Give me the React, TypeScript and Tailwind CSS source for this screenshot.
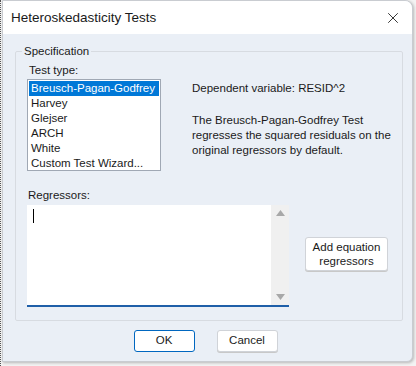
import { X } from "lucide-react";

const tests = [
  "Breusch-Pagan-Godfrey",
  "Harvey",
  "Glejser",
  "ARCH",
  "White",
  "Custom Test Wizard...",
];

export default function App() {
  return (
    <div
      className="flex h-[366px] w-[416px] bg-[#f3f3f3] text-[11.5px] text-[#1a1a1a]"
      style={{ fontFamily: '"Liberation Sans", Arial, sans-serif' }}
    >
      {/* bit of the window behind */}
      <div className="w-[2px] border-l border-dotted border-[#555]" />

      <div className="mb-[4px] mr-[3px] flex flex-1 flex-col overflow-hidden rounded-tr-[8px] rounded-br-[6px] border border-[#c9ccd1] bg-[#eaeff6] shadow-[1px_1px_3px_rgba(0,0,0,0.25)]">
        {/* Title bar */}
        <div className="flex h-[33px] items-center justify-between bg-white pl-[8px] pr-[10px]">
          <span className="whitespace-nowrap text-[13.5px] leading-none">Heteroskedasticity Tests</span>
          <X size={18} strokeWidth={1.2} className="text-[#222]" />
        </div>

        <div className="flex flex-1 flex-col px-[12px] pt-[10px]">
          {/* Specification group */}
          <fieldset className="h-[277px] rounded-[2px] border border-[#d7dbe1] px-[11px] pb-[10px]">
            <legend className="ml-[-5px] px-[2px] leading-[14px]">Specification</legend>

            <div className="mt-[4px] flex">
              <div className="flex flex-col">
                <span className="ml-[2px] mt-[1px] leading-[14px]">Test type:</span>
                <ul className="mt-[2px] h-[92px] w-[134px] border border-[#a0a8b4] bg-white p-[1px] leading-[15px]">
                  {tests.map((t, i) => (
                    <li
                      key={t}
                      className={
                        i === 0
                          ? "whitespace-nowrap bg-[#0078d7] pl-[2px] text-white"
                          : "whitespace-nowrap pl-[2px]"
                      }
                    >
                      {t}
                    </li>
                  ))}
                </ul>
              </div>

              <div className="ml-[31px] mt-[19px] flex flex-col whitespace-nowrap leading-[15px]">
                <span>Dependent variable: RESID^2</span>
                <p className="mt-[17px]">
                  The Breusch-Pagan-Godfrey Test
                  <br />
                  regresses the squared residuals on the
                  <br />
                  original regressors by default.
                </p>
              </div>
            </div>

            <div className="mt-[17px] flex">
              <div className="flex flex-col">
                <span className="ml-[1px] leading-[14px]">Regressors:</span>
                <div className="mt-[3px] flex h-[102px] w-[262px] border-b-2 border-[#1f5fa8] bg-white">
                  <div className="flex-1 pl-[6px] pt-[4px]">
                    <div className="h-[14px] w-[1px] bg-black" />
                  </div>
                  <div className="flex w-[18px] flex-col items-center justify-between bg-[#f0f0f0] py-[5px]">
                    <svg width="9" height="6" viewBox="0 0 9 6">
                      <path d="M0 6 L4.5 0 L9 6 Z" fill="#a8a8a8" />
                    </svg>
                    <svg width="9" height="6" viewBox="0 0 9 6">
                      <path d="M0 0 L4.5 6 L9 0 Z" fill="#a8a8a8" />
                    </svg>
                  </div>
                </div>
              </div>

              <button className="ml-[16px] mt-[49px] h-[34px] w-[83px] self-start whitespace-nowrap rounded-[3px] border border-[#d0d3d8] bg-white text-center leading-[14px] shadow-[0_1px_0_#c8c8c8]">
                Add equation
                <br />
                regressors
              </button>
            </div>
          </fieldset>

          {/* Buttons */}
          <div className="mt-[9px] flex justify-center gap-[22px] pr-[4px]">
            <button className="h-[22px] w-[61px] rounded-[3px] border border-[#0067c0] bg-white">
              OK
            </button>
            <button className="h-[22px] w-[61px] rounded-[3px] border border-[#d0d3d8] bg-white shadow-[0_1px_0_#c8c8c8]">
              Cancel
            </button>
          </div>
        </div>
      </div>
    </div>
  );
}
